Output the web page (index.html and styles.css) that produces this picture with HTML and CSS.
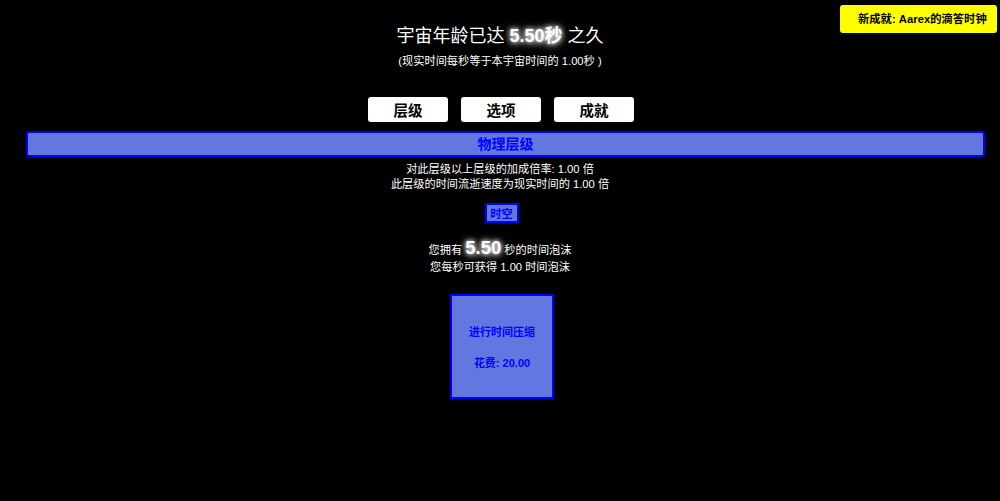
FILE: index.html
```html
<!DOCTYPE html>
<html>
<head>
<meta charset="utf-8">
<link rel="stylesheet" href="styles.css">
</head>
<body>
<div class="notify">新成就: Aarex的滴答时钟</div>
<header class="top">
  <div class="age">宇宙年龄已达 <span class="glow">5.50秒</span> 之久</div>
  <div class="rate">(现实时间每秒等于本宇宙时间的 1.00秒 )</div>
</header>
<nav class="tabs">
  <button class="tab">层级</button>
  <button class="tab">选项</button>
  <button class="tab">成就</button>
</nav>
<div class="layer-bar">物理层级</div>
<div class="info">
  <div>对此层级以上层级的加成倍率: 1.00 倍</div>
  <div>此层级的时间流逝速度为现实时间的 1.00 倍</div>
</div>
<div class="subtabs"><button class="subtab">时空</button></div>
<div class="bubbles">
  <div class="have">您拥有 <span class="big glow">5.50</span> 秒的时间泡沫</div>
  <div class="gain">您每秒可获得 1.00 时间泡沫</div>
</div>
<div class="boxes">
  <button class="box">
    <span>进行时间压缩</span>
    <span>花费: 20.00</span>
  </button>
</div>
</body>
</html>
```
FILE: styles.css
```css
html, body {
  margin: 0;
  padding: 0;
  background: #000;
  color: #fff;
  font-family: "Liberation Sans", "Noto Sans CJK SC", sans-serif;
}
body {
  height: 501px;
  overflow: hidden;
  position: relative;
}
.notify {
  position: absolute;
  top: 5px;
  right: 3px;
  width: 157px;
  height: 28px;
  box-sizing: border-box;
  padding-left: 18px;
  background: #ffff00;
  color: #000;
  border-radius: 3px;
  font-weight: bold;
  font-size: 11.3px;
  line-height: 28px;
}
.top {
  text-align: center;
  padding-top: 24px;
}
.age {
  font-size: 18px;
  line-height: 24px;
}
.glow {
  font-weight: bold;
  text-shadow: 0 0 4px #fff, 0 0 8px #aaa, 0 2px 8px #888;
}
.rate {
  font-size: 11.2px;
  line-height: 16px;
  margin-top: 5px;
}
.tabs {
  display: flex;
  justify-content: center;
  gap: 13px;
  margin-top: 28px;
  padding-left: 2px;
}
.tab {
  width: 80px;
  height: 25px;
  background: #fff;
  color: #000;
  border: none;
  border-radius: 3px;
  font-family: inherit;
  font-weight: bold;
  font-size: 14.5px;
  padding: 0;
}
.layer-bar {
  margin: 9px 15px 0 26px;
  height: 26px;
  box-sizing: border-box;
  border: 2px solid #0000ff;
  border-radius: 3px;
  background: #6278e0;
  color: #0000ff;
  font-weight: bold;
  font-size: 14px;
  line-height: 22px;
  text-align: center;
}
.info {
  text-align: center;
  font-size: 11.2px;
  line-height: 15px;
  margin-top: 5px;
}
.subtabs {
  display: flex;
  justify-content: center;
  margin-top: 11px;
}
.subtab {
  width: 34px;
  height: 20px;
  padding: 0;
  box-sizing: border-box;
  border: 2px solid #0000ff;
  background: #6278e0;
  color: #0000ff;
  font-family: inherit;
  font-weight: bold;
  font-size: 11.2px;
  margin-left: 3px;
}
.bubbles {
  text-align: center;
  font-size: 11.2px;
  margin-top: 15px;
}
.have {
  line-height: 20px;
}
.gain {
  line-height: 14px;
}
.big {
  font-size: 18.5px;
}
.boxes {
  display: flex;
  justify-content: center;
  margin-top: 20px;
}
.box {
  width: 104px;
  height: 105px;
  box-sizing: border-box;
  border: 2px solid #0000ff;
  background: #6278e0;
  color: #0000ff;
  font-family: inherit;
  font-weight: bold;
  font-size: 11px;
  display: flex;
  flex-direction: column;
  align-items: center;
  justify-content: center;
  gap: 15px;
  padding: 0;
  margin-left: 4px;
}
```
